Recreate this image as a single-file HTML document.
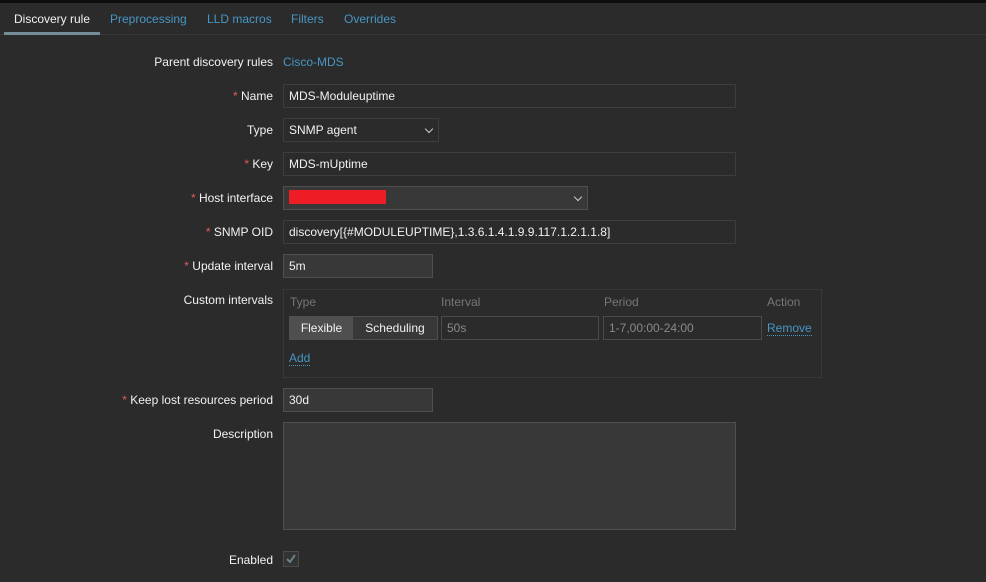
<!DOCTYPE html>
<html><head><style>
*{box-sizing:border-box;margin:0;padding:0}
body{width:986px;height:582px;background:#2b2b2b;font-family:"Liberation Sans",Arial,sans-serif;font-size:12px;color:#f2f2f2;position:relative;overflow:hidden}
.top{position:absolute;left:0;top:0;width:986px;height:3px;background:#0e0e0e}
.tabs{position:absolute;left:0;top:3px;width:986px;height:32px;border-bottom:1px solid #383838}
.tab{position:absolute;top:9px;color:#4796c4}
.tab.a{color:#f2f2f2}
.ul{position:absolute;left:4px;top:29px;width:96px;height:3px;background:#768d99}
.lbl{position:absolute;right:713px;text-align:right;white-space:nowrap}
.req{color:#e45959}
.in{position:absolute;left:283px;height:24px;border:1px solid #3d3d3d;background:#2b2b2b;padding:4px 5px;white-space:nowrap}
.ed{background:#383838;border-color:#4f4f4f}
.chev{position:absolute;right:6px;top:7px;width:6px;height:6px;border-right:1px solid #ccc;border-bottom:1px solid #ccc;transform:rotate(45deg)}
.box{position:absolute;left:283px;top:289px;width:539px;height:89px;border:1px solid #383838}
.h{position:absolute;top:5px;color:#777}
.link{color:#4796c4;border-bottom:1px dotted #4796c4}
</style></head><body>
<div class="top"></div>
<div class="tabs">
<span class="tab a" style="left:14px">Discovery rule</span>
<span class="tab" style="left:110px">Preprocessing</span>
<span class="tab" style="left:207px">LLD macros</span>
<span class="tab" style="left:291px">Filters</span>
<span class="tab" style="left:344px">Overrides</span>
<div class="ul"></div>
</div>

<div class="lbl" style="top:55px">Parent discovery rules</div>
<div style="position:absolute;left:283px;top:55px;color:#4796c4">Cisco-MDS</div>

<div class="lbl" style="top:89px"><span class="req">*</span> Name</div>
<div class="in" style="top:84px;width:453px">MDS-Moduleuptime</div>

<div class="lbl" style="top:123px">Type</div>
<div class="in" style="top:118px;width:156px">SNMP agent<span class="chev"></span></div>

<div class="lbl" style="top:157px"><span class="req">*</span> Key</div>
<div class="in" style="top:152px;width:453px">MDS-mUptime</div>

<div class="lbl" style="top:191px"><span class="req">*</span> Host interface</div>
<div class="in ed" style="top:186px;width:305px"><div style="position:absolute;left:5px;top:3px;width:97px;height:14px;background:#ee1c25"></div><span class="chev"></span></div>

<div class="lbl" style="top:225px"><span class="req">*</span> SNMP OID</div>
<div class="in" style="top:220px;width:453px">discovery[{#MODULEUPTIME},1.3.6.1.4.1.9.9.117.1.2.1.1.8]</div>

<div class="lbl" style="top:259px"><span class="req">*</span> Update interval</div>
<div class="in ed" style="top:254px;width:150px">5m</div>

<div class="lbl" style="top:293px">Custom intervals</div>
<div class="box">
<span class="h" style="left:6px">Type</span>
<span class="h" style="left:157px">Interval</span>
<span class="h" style="left:320px">Period</span>
<span class="h" style="left:483px">Action</span>
<div style="position:absolute;left:5px;top:26px;width:149px;height:24px;border:1px solid #4f4f4f;background:#383838">
<div style="position:absolute;left:0;top:0;width:63px;height:22px;background:#4f4f4f;text-align:center;padding-top:4px">Flexible</div>
<div style="position:absolute;left:63px;top:0;width:84px;height:22px;text-align:center;padding-top:4px">Scheduling</div>
</div>
<div class="in" style="left:157px;top:26px;width:158px;border-color:#4a4a4a;color:#8a8a8a">50s</div>
<div class="in" style="left:319px;top:26px;width:159px;border-color:#4a4a4a;color:#8a8a8a">1-7,00:00-24:00</div>
<span class="link" style="position:absolute;left:483px;top:31px">Remove</span>
<span class="link" style="position:absolute;left:5px;top:61px">Add</span>
</div>

<div class="lbl" style="top:393px"><span class="req">*</span> Keep lost resources period</div>
<div class="in ed" style="top:388px;width:150px">30d</div>

<div class="lbl" style="top:427px">Description</div>
<div class="in ed" style="top:422px;width:453px;height:108px"></div>

<div class="lbl" style="top:553px">Enabled</div>
<div style="position:absolute;left:283px;top:551px;width:16px;height:16px;border:1px solid #4a4a4a;background:#333"><svg width="14" height="14" style="position:absolute;left:0;top:0"><path d="M3 7 L6 10 L11 3" stroke="#6d7f88" stroke-width="2" fill="none"/></svg></div>
</body></html>
